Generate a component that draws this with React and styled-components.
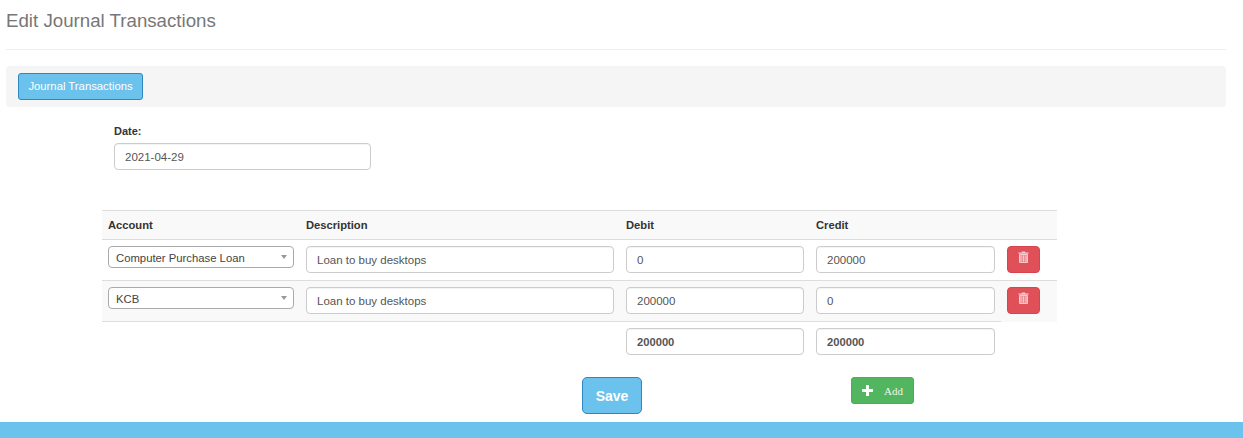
import React from "react";
import styled, { createGlobalStyle } from "styled-components";

const GlobalStyle = createGlobalStyle`
  html, body {
    margin: 0;
    padding: 0;
    background: #fff;
    font-family: "Liberation Sans", Arial, sans-serif;
    font-size: 11px;
    color: #333;
  }
  * {
    box-sizing: border-box;
  }
`;

const Page = styled.div`
  height: 438px;
  display: flex;
  flex-direction: column;
  overflow: hidden;
`;
const Content = styled.div`
  flex: 1;
  padding: 0 17px 0 6px;
`;
const Title = styled.h3`
  margin: 0;
  height: 49px;
  padding-top: 11px;
  font-size: 18.7px;
  line-height: 20px;
  font-weight: 400;
  color: #777;
`;
const Toolbar = styled.div`
  border-top: 1px solid #eee;
  padding-top: 16px;
`;
const ToolbarInner = styled.div`
  height: 41px;
  padding: 7px 12px;
  background: #f5f5f5;
  border-radius: 4px;
`;
const InfoButton = styled.button`
  display: block;
  height: 27px;
  width: 125px;
  padding: 0 0 2px;
  font: 11.3px "Liberation Sans", Arial, sans-serif;
  color: #fff;
  background: #6bc2ec;
  border: 1px solid #2e86c1;
  border-radius: 3px;
`;
const DateBlock = styled.div`
  margin: 17px 0 0 108px;
  width: 257px;
`;
const Label = styled.label`
  display: block;
  height: 19px;
  line-height: 14px;
  font-weight: 700;
  font-size: 11px;
`;
const Field = styled.input`
  display: block;
  width: 100%;
  height: 27px;
  padding: 0 10px;
  font: ${(p) => (p.$bold ? "700 11.2px" : "400 11.5px")} "Liberation Sans", Arial, sans-serif;
  color: #555;
  background: #fff;
  border: 1px solid #ccc;
  border-radius: 4px;
  box-shadow: inset 0 1px 1px rgba(0, 0, 0, 0.05);
`;
const SelectBox = styled.div`
  position: relative;
  width: 186px;
  height: 22px;
  margin-bottom: 5px;
  padding-left: 7px;
  line-height: 22px;
  font-size: 11.3px;
  color: #444;
  background: #fff;
  border: 1px solid #aaa;
  border-radius: 4px;
`;
const Caret = styled.span`
  position: absolute;
  top: 8px;
  right: 6px;
  border-style: solid;
  border-width: 4px 3px 0;
  border-color: #999 transparent transparent;
`;
const Table = styled.table`
  width: 955px;
  margin: 40px 0 0 96px;
  border-collapse: separate;
  border-spacing: 0;
  table-layout: fixed;
`;
const HeadCell = styled.th`
  height: 30px;
  padding: 0 6px;
  text-align: left;
  font-size: 11.2px;
  font-weight: 700;
  color: #333;
  background: #f9f9f9;
  border-top: 1px solid #ddd;
  border-bottom: 1px solid #ddd;
`;
const Row = styled.tr`
  background: ${(p) => (p.$striped ? "#f9f9f9" : "#fff")};
`;
const Cell = styled.td`
  height: 41px;
  padding: 6px 6px 7px;
  vertical-align: top;
  border-bottom: ${(p) => (p.$open ? "none" : "1px solid #ddd")};
`;
const DangerButton = styled.button`
  display: flex;
  align-items: flex-start;
  justify-content: center;
  width: 33px;
  height: 27px;
  padding: 4px 0 0;
  background: #e05058;
  border: 1px solid #d9434c;
  border-radius: 4px;
`;
const Actions = styled.div`
  display: flex;
  margin-top: 14px;
`;
const SaveButton = styled.button`
  width: 60px;
  height: 37px;
  margin-left: 576px;
  padding: 0;
  font: 700 14px "Liberation Sans", Arial, sans-serif;
  color: #fff;
  background: #6bc2ec;
  border: 1px solid #2e86c1;
  border-radius: 5px;
`;
const AddButton = styled.button`
  display: flex;
  align-items: center;
  width: 63px;
  height: 27px;
  margin-left: 209px;
  padding: 0 0 0 10px;
  font: 11px "Liberation Serif", "Times New Roman", serif;
  color: #fff;
  background: #52b560;
  border: 1px solid #4cae4c;
  border-radius: 3px;
`;
const AddLabel = styled.span`
  margin-left: 11px;
  margin-top: 1px;
  opacity: 0.9;
`;
const Footer = styled.div`
  height: 16px;
  background: #6bc2ec;
`;

const TrashIcon = () => (
  <svg width="11" height="12" viewBox="0 0 11 12">
    <path d="M4 0.5h3l.5 1H10.500v1.200H.5V1.500H3.500z" fill="#f6c9cc" />
    <path
      d="M1.500 3.500h8v8h-8z M3 4.500v6 M5.500 4.500v6 M8 4.500v6"
      fill="#eb8f95"
      stroke="#f6c9cc"
      strokeWidth="1"
    />
  </svg>
);

const PlusIcon = () => (
  <svg width="11" height="11" viewBox="0 0 11 11">
    <path d="M4 0h3v4h4v3H7v4H4V7H0V4h4z" fill="#fff" />
  </svg>
);

const rows = [
  { account: "Computer Purchase Loan", debit: "0", credit: "200000" },
  { account: "KCB", debit: "200000", credit: "0", striped: true },
];

export default function App() {
  return (
    <Page>
      <GlobalStyle />
      <Content>
        <Title>Edit Journal Transactions</Title>
        <Toolbar>
          <ToolbarInner>
            <InfoButton>Journal Transactions</InfoButton>
          </ToolbarInner>
        </Toolbar>
        <DateBlock>
          <Label>Date:</Label>
          <Field defaultValue="2021-04-29" />
        </DateBlock>
        <Table>
          <colgroup>
            <col style={{ width: 198 }} />
            <col style={{ width: 320 }} />
            <col style={{ width: 190 }} />
            <col style={{ width: 191 }} />
            <col style={{ width: 56 }} />
          </colgroup>
          <thead>
            <tr>
              <HeadCell>Account</HeadCell>
              <HeadCell>Description</HeadCell>
              <HeadCell>Debit</HeadCell>
              <HeadCell>Credit</HeadCell>
              <HeadCell />
            </tr>
          </thead>
          <tbody>
            {rows.map((row) => (
              <Row key={row.account} $striped={row.striped}>
                <Cell>
                  <SelectBox>
                    {row.account}
                    <Caret />
                  </SelectBox>
                </Cell>
                <Cell>
                  <Field defaultValue="Loan to buy desktops" />
                </Cell>
                <Cell>
                  <Field defaultValue={row.debit} />
                </Cell>
                <Cell>
                  <Field defaultValue={row.credit} />
                </Cell>
                <Cell $open={row.striped}>
                  <DangerButton>
                    <TrashIcon />
                  </DangerButton>
                </Cell>
              </Row>
            ))}
            <tr>
              <Cell $open />
              <Cell $open />
              <Cell $open>
                <Field $bold defaultValue="200000" />
              </Cell>
              <Cell $open>
                <Field $bold defaultValue="200000" />
              </Cell>
              <Cell $open />
            </tr>
          </tbody>
        </Table>
        <Actions>
          <SaveButton>Save</SaveButton>
          <AddButton>
            <PlusIcon />
            <AddLabel>Add</AddLabel>
          </AddButton>
        </Actions>
      </Content>
      <Footer />
    </Page>
  );
}
